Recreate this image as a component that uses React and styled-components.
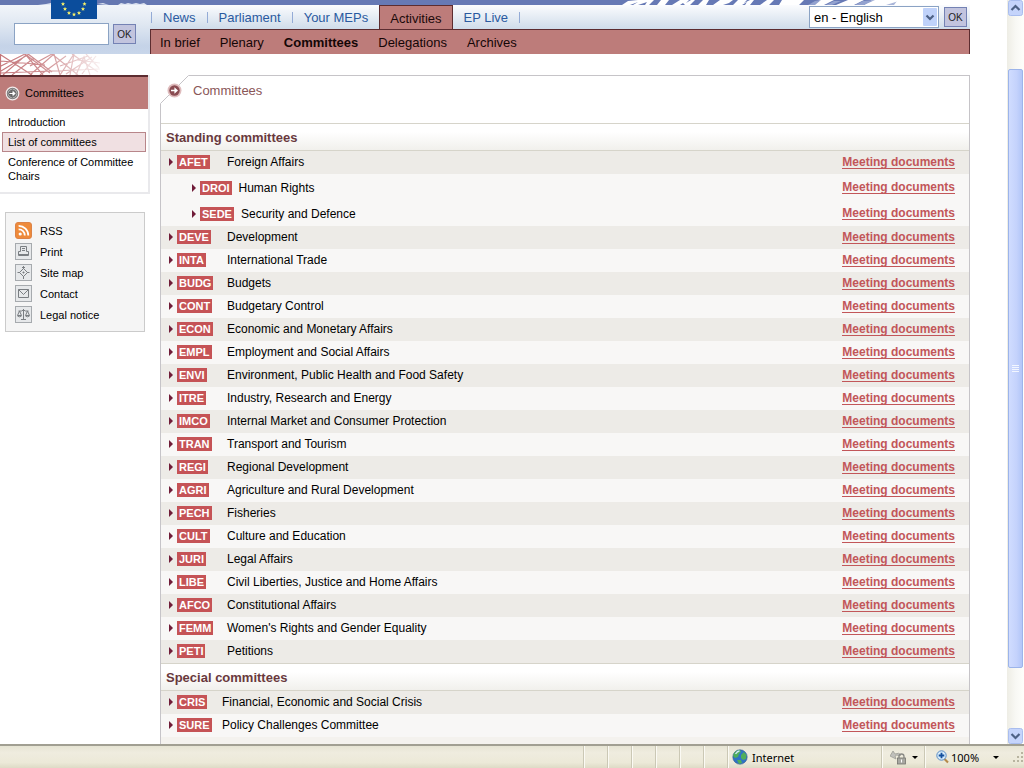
import React from "react";
import styled, { createGlobalStyle } from "styled-components";

const c = {
  rose: "#bd7c7a",
  roseDark: "#5c2c30",
  badge: "#c55356",
  link: "#c25659",
  blue: "#2a5aa0",
  line: "#c6c4c8",
  rowLine: "#d6d4ca",
};

const GlobalStyle = createGlobalStyle`
  * { box-sizing: border-box; }
  body {
    margin: 0;
    background: #fff;
    color: #000;
    font-family: "Liberation Sans", Arial, sans-serif;
    font-size: 12px;
  }
  a { color: inherit; text-decoration: none; }
  ul { list-style: none; margin: 0; padding: 0; }
  h1, h2 { margin: 0; }
`;

const Window = styled.div`
  display: flex;
  flex-direction: column;
  min-height: 100vh;
`;

const Viewport = styled.div`
  display: flex;
  flex: 1;
`;

const Page = styled.div`
  display: flex;
  flex-direction: column;
  flex: 1;
  min-width: 0;
  padding-right: 37px;
`;

/* ---------- header ---------- */

const Header = styled.header`
  display: grid;
  grid-template-columns: 150px 1fr;
`;

const Brand = styled.div`
  display: flex;
  flex-direction: column;
  height: 54px;
  background: linear-gradient(#6577b1 5px, #f2f5fa 5px, #e0e8f2 24px, #c5d3e8 46px, #c8d6ea);
`;

const Flag = styled.svg`
  display: block;
`;

const SearchForm = styled.form`
  display: flex;
  align-items: center;
  gap: 4px;
  margin: 4px 0 0 14px;
`;

const SearchBox = styled.input`
  width: 95px;
  height: 22px;
  padding: 0 3px;
  border: 1px solid #8ba3c4;
  background: #fff;
  font: 12px "Liberation Sans", Arial, sans-serif;
`;

const OkButton = styled.button`
  width: 23px;
  height: 20px;
  padding: 0;
  border: 1px solid #7482b4;
  background: #c2c4de;
  color: #222;
  font: 10px "Liberation Sans", Arial, sans-serif;
`;

const HeaderMain = styled.div`
  display: flex;
  flex-direction: column;
  min-width: 0;
`;

const Strip = styled.div`
  display: flex;
  justify-content: flex-end;
  height: 5px;
  background: #6679b5;
`;

const NavBar = styled.div`
  display: flex;
  justify-content: space-between;
  height: 24px;
  padding: 0 3px 0 1px;
  background: linear-gradient(#fbfcfe, #cfdcea);
`;

const NavList = styled.ul`
  display: flex;
  height: 25px;
  font-size: 13px;
  color: ${c.blue};
`;

const NavItem = styled.li`
  display: flex;
  align-items: center;
  height: 25px;
  padding: ${(p) => (p.$active ? "0 10px" : "0 11px")};
  ${(p) =>
    p.$active &&
    `
    color: #1c0a0a;
    background: ${c.rose};
    border: 1px solid ${c.roseDark};
    border-bottom: 0;
  `}
`;

const Divider = styled.li`
  align-self: center;
  width: 1px;
  height: 11px;
  background: #94abd6;
`;

const LangForm = styled.form`
  display: flex;
  align-items: center;
  gap: 5px;
`;

const SelectWrap = styled.span`
  position: relative;
  display: flex;
`;

const Select = styled.select`
  appearance: none;
  width: 130px;
  height: 22px;
  padding: 0 20px 0 4px;
  border: 1px solid #8ba3c4;
  border-radius: 0;
  background: #fff;
  color: #000;
  font: 13px "Liberation Sans", Arial, sans-serif;
`;

const SelectArrow = styled.svg`
  position: absolute;
  right: 2px;
  top: 2px;
  pointer-events: none;
`;

const SubNav = styled.ul`
  display: flex;
  align-items: center;
  height: 25px;
  padding-left: 9px;
  gap: 20px;
  border: 1px solid ${c.roseDark};
  border-bottom: 0;
  background: ${c.rose};
  color: #140606;
  font-size: 13px;
`;

const SubNavItem = styled.li`
  font-weight: ${(p) => (p.$active ? "bold" : "normal")};
`;

/* ---------- side column ---------- */

const Body = styled.div`
  display: grid;
  grid-template-columns: 150px 1fr;
  column-gap: 10px;
  flex: 1;
`;

const Side = styled.aside`
  font-size: 11px;
`;

const Lattice = styled.svg`
  display: block;
`;

const SideMenu = styled.nav`
  padding-bottom: 6px;
  border-right: 2px solid #e9e9ec;
  border-bottom: 2px solid #e9e9ec;
`;

const SideHead = styled.div`
  display: flex;
  align-items: center;
  gap: 5px;
  height: 34px;
  padding-left: 5px;
  border-top: 2px solid ${c.roseDark};
  background: ${c.rose};
`;

const SideList = styled.ul`
  display: flex;
  flex-direction: column;
  padding: 3px 2px 0;
  line-height: 14px;
`;

const SideItem = styled.li`
  padding: 2px 5px;
  border: 1px solid ${(p) => (p.$active ? "#b8868a" : "transparent")};
  background: ${(p) => (p.$active ? "#f0e0e2" : "transparent")};
`;

const Tools = styled.ul`
  display: flex;
  flex-direction: column;
  gap: 4px;
  margin: 18px 5px 0;
  padding: 9px 9px 8px;
  border: 1px solid #cbcbcb;
  background: #f5f5f5;
`;

const Tool = styled.li`
  display: flex;
  align-items: center;
  gap: 8px;
  height: 17px;
`;

/* ---------- content card ---------- */

const Card = styled.main`
  position: relative;
  margin-top: 21px;
  border: 1px solid ${c.line};
  border-bottom: 0;
  background: linear-gradient(#fff 50%, #f4f2ee 50%);
`;

const Corner = styled.svg`
  position: absolute;
  top: -1px;
  left: -1px;
`;

const Title = styled.h1`
  position: relative;
  display: flex;
  align-items: flex-start;
  gap: 11px;
  height: 47px;
  padding: 7px 6px;
  color: #8a5658;
  font-size: 13px;
  font-weight: normal;
  line-height: 16px;
`;

const GroupTitle = styled.h2`
  height: 28px;
  padding-left: 5px;
  border: solid ${c.rowLine};
  border-width: 1px 0;
  background: linear-gradient(#fff 30%, #f1f0ec);
  color: #69393d;
  font-size: 13px;
  line-height: 27px;
`;

const Table = styled.table`
  width: 100%;
  border-collapse: collapse;
  table-layout: fixed;
`;

const Row = styled.tr`
  height: ${(p) => (p.$sub ? 26 : 23)}px;
  background: ${(p) => (p.$dark ? "#edebe7" : "#f8f7f6")};
`;

const Cell = styled.td`
  padding: 0 0 1px;
`;

const CodeCell = styled(Cell)`
  padding-left: 8px;
`;

const LinkCell = styled(Cell)`
  padding-right: 14px;
  text-align: right;
`;

const Committee = styled.div`
  display: flex;
  align-items: center;
  padding: ${(p) => (p.$sub ? "3px 0 0 31px" : "0")};
`;

const Arrow = styled.svg`
  flex: none;
  margin-right: 4px;
`;

const Badge = styled.span`
  height: 14px;
  margin-right: 7px;
  padding: 0 2px;
  background: ${c.badge};
  color: #fff;
  font-size: 11px;
  font-weight: bold;
  line-height: 14px;
`;

const DocLink = styled.a`
  display: inline-block;
  border-bottom: 1px solid ${c.link};
  color: ${c.link};
  font-size: 12px;
  font-weight: bold;
  line-height: 12px;
  vertical-align: middle;
`;

/* ---------- browser frame ---------- */

const ScrollBar = styled.div`
  display: flex;
  flex-direction: column;
  width: 17px;
  padding: 0 1px;
  background: linear-gradient(90deg, #eeede5, #f8f8f4 50%, #fefefb);
`;

const Track = styled.div`
  display: grid;
  flex: 1;
  grid-template-rows: 53fr 599fr 60fr;
`;

const Thumb = styled.div`
  display: flex;
  align-items: center;
  justify-content: center;
  grid-row: 2;
  border: 1px solid #9cb4ea;
  border-radius: 2px;
  background: linear-gradient(90deg, #d0dcff, #c4d2fc 60%, #b2c6f8);
`;

const StatusBar = styled.footer`
  display: flex;
  justify-content: flex-end;
  height: 24px;
  border-top: 2px solid #a19f92;
  background: linear-gradient(#e6e4d3, #efecdf 30%, #ece9d8 75%, #dedbc6);
  font: 11px "Noto Sans", sans-serif;
`;

const Pane = styled.div`
  display: flex;
  align-items: center;
  gap: ${(p) => p.$gap || 0}px;
  width: ${(p) => p.$width}px;
  padding-left: ${(p) => p.$pad || 0}px;
  border-left: 1px solid #cbc8b5;
  box-shadow: inset 1px 0 #fbfaf4;
`;

const Spacer = styled.span`
  flex: 1;
`;

/* ---------- drawings ---------- */

const star = (x, y, r) => {
  const pts = [];
  for (let i = 0; i < 10; i++) {
    const a = (Math.PI / 5) * i - Math.PI / 2;
    const q = i % 2 ? r * 0.45 : r;
    pts.push(`${(x + q * Math.cos(a)).toFixed(2)},${(y + q * Math.sin(a)).toFixed(2)}`);
  }
  return pts.join(" ");
};

const FlagArt = () => (
  <Flag width="150" height="19" viewBox="0 0 150 19" role="img" aria-label="European Parliament">
    <path d="M38 5l8-1 5-1v2zM97 4l6-1 6 2zM118 5l3-2 4 1 3-1 4 1 4-1 4 1 4-1 3 2z" fill="#dfe5f2" />
    <rect x="51" y="0" width="46" height="19" fill="#0b4d9c" />
    {[
      [63, 4],
      [65, 9],
      [69, 13],
      [74, 14.5],
      [79, 13],
      [83, 9],
      [84.5, 4],
    ].map(([x, y]) => (
      <polygon key={x} points={star(x, y, 2.2)} fill="#f5f06a" />
    ))}
  </Flag>
);

const StripArt = () => (
  <svg width="350" height="5" viewBox="0 0 350 5" aria-hidden="true">
    <path d="M278 0H350V5H262z" fill="#fff" />
    <path d="M261 5l7-4h9l-3 4z" fill="#a9b5d8" />
    <path
      d="M2 5L8 1l10-1h16l-5 5h-4l2-3-9 3H13l5-3-8 3zM37 5l4-5h8l-4 5zM52 5l8-5h9l-3 3 5-3h4l-5 5h-5l-2-2-3 2zM78 5l5-5h6l-3 5zM93 5l7-5h13l-4 3-6 2zM113 5l5-5h9l-3 3 6-3h4l-4 5h-5l2-3-5 3zM140 5l7-5h7l-5 5zM159 5l3-5h22l-5 5zM193 5l7-5h14l-10 5zM216 5l12-5h16l-10 5zM244 5l8-5h30l-16 5z"
      fill="#fff"
    />
    <path d="M188 5l7-4 6-1-6 5zM206 5l8-4h7l-9 4zM235 5l8-4 12-1-11 5z" fill="#93a2cf" />
  </svg>
);

const LatticeArt = () => (
  <Lattice width="150" height="21" viewBox="0 0 150 21" aria-hidden="true">
    <defs>
      <linearGradient id="fade">
        <stop offset="0" stopColor="#fff" stopOpacity="0" />
        <stop offset=".45" stopColor="#fff" stopOpacity=".2" />
        <stop offset="1" stopColor="#fff" stopOpacity=".9" />
      </linearGradient>
    </defs>
    <path
      d="M.5 0V21M1 1L32 21M1 17L29 0M1 12L25 0L50 19M1 7L45 11M3 21L26 1L43 21M12 21L34 4M1 19L100 15M28 0L52 18M30 21L54 0L60 21M40 21L66 2M52 0L78 21M52 0L30 12M60 21L74 0L70 21M60 12L88 2M72 0L98 18M66 20L92 3M76 21L84 3L90 21M82 20L96 2M86 0L99 14M78 6L100 9"
      fill="none"
      stroke="#c5777b"
      strokeWidth="1.2"
    />
    <rect width="101" height="21" fill="url(#fade)" />
  </Lattice>
);

const TitleBullet = () => (
  <svg width="15" height="15" viewBox="0 0 15 15" aria-hidden="true">
    <circle cx="7.5" cy="7.5" r="7" fill="#dfbcbd" />
    <circle cx="7.5" cy="7.5" r="5.2" fill="#8a4c52" />
    <path d="M4 6.7h3.4V4.2L11 7.5l-3.6 3.3V8.3H4z" fill="#fff" />
  </svg>
);

const SideBullet = () => (
  <svg width="15" height="15" viewBox="0 0 15 15" aria-hidden="true">
    <circle cx="7.5" cy="7.5" r="6.3" fill="#747474" stroke="#f3ecec" strokeWidth="1.2" />
    <circle cx="7.5" cy="7.5" r="4.4" fill="none" stroke="#c9c9c9" strokeWidth=".8" />
    <path d="M4 6.5h3.2V3.8L11.2 7.5l-4 3.7V8.5H4z" fill="#fff" stroke="#333" strokeWidth=".6" />
  </svg>
);

const iconPaths = {
  Print: "M5.500 8.500V3.500h6v5M7 5.500H10M7 7.500H10M3.500 8.500h2M11.500 8.500h2v4h-10v-4M3 11.500h11",
  "Site map": "M8.500 2v3M8.500 12v3M2.500 8.500H5M12 8.500h2.500M8.500 4.500l4 4-4 4-4-4zM7 3.500h3M8.500 7.500v2M7.500 8.500h2",
  Contact: "M3.500 4.500h10v8h-10zM3.500 4.500l5 5 5-5",
  "Legal notice":
    "M8.500 3v10M6 13.500h5M3.500 5h3l2-1 2 1h3M4.500 5l-2 4.500h4zM12.500 5l-2 4.500h4zM2.500 10q2 1.600 4 0M10.500 10q2 1.600 4 0",
};

const ToolIcon = ({ name }) =>
  name === "RSS" ? (
    <svg width="17" height="17" viewBox="0 0 17 17" aria-hidden="true">
      <rect x=".5" y=".5" width="16" height="16" rx="2.5" fill="#ee8a3a" stroke="#dc8348" />
      <circle cx="5.2" cy="12" r="1.6" fill="#fff" />
      <path d="M3.6 7.3a6 6 0 0 1 6.2 6.2M3.6 3.8a9.6 9.6 0 0 1 9.7 9.7" fill="none" stroke="#fff" strokeWidth="1.8" />
    </svg>
  ) : (
    <svg width="17" height="17" viewBox="0 0 17 17" aria-hidden="true">
      <rect x=".5" y=".5" width="16" height="16" fill="#e6e8ea" stroke="#a6aaae" />
      <path d={iconPaths[name]} fill="none" stroke="#7a7e82" />
    </svg>
  );

const ScrollButton = ({ down }) => (
  <svg width="15" height="16" viewBox="0 0 15 16" aria-hidden="true">
    <rect x=".5" y=".5" width="14" height="15" rx="2" fill="#c5d4fb" stroke="#a9bdee" />
    <path d={down ? "M3.5 6l4 4 4-4" : "M3.5 10l4-4 4 4"} fill="none" stroke="#4d6185" strokeWidth="2.2" />
  </svg>
);

const DropMark = () => (
  <svg width="6" height="3" viewBox="0 0 6 3" aria-hidden="true">
    <path d="M0 0h6L3 3z" fill="#000" />
  </svg>
);

const Globe = () => (
  <svg width="16" height="16" viewBox="0 0 16 16" aria-hidden="true">
    <circle cx="8" cy="8" r="7.2" fill="#2f74c4" stroke="#33598f" strokeWidth=".6" />
    <path d="M2 4q3-3.5 6-3l1 2-2 2-1 3-3 1-2-2zM9 6l3-3 2.5 3-.5 4-3 1-2-2zM5 11l4 0 1 3-3 1z" fill="#4fae5a" />
    <path d="M3.5 5q2-3 4-3" fill="none" stroke="#cfe8fb" strokeWidth="1.3" />
  </svg>
);

const LockIcon = () => (
  <svg width="16" height="16" viewBox="0 0 16 16" aria-hidden="true">
    <path d="M0 7l3-5 2 3q4-2 6 1l-2 1q-2-2-4 0l1 3z" fill="#c0c0bc" stroke="#96968f" strokeWidth=".7" />
    <path d="M9 9V7.5a2.5 2.5 0 0 1 5 0V9" fill="none" stroke="#8a8a86" strokeWidth="1.3" />
    <rect x="7.5" y="9" width="8" height="6" fill="#a8a8a2" stroke="#74746e" strokeWidth=".8" />
    <path d="M11.5 10.500v3" stroke="#fff" />
  </svg>
);

const ZoomIcon = () => (
  <svg width="13" height="14" viewBox="0 0 13 14" aria-hidden="true">
    <path d="M8 8.5l4 4" stroke="#b58a4a" strokeWidth="2.2" />
    <circle cx="5.5" cy="5.5" r="4.7" fill="#d6ebfa" stroke="#5b8cc4" />
    <path d="M5.5 2.7v5.6M2.7 5.5h5.6" stroke="#14509e" strokeWidth="1.8" />
  </svg>
);

const SizeGrip = () => (
  <svg width="12" height="12" viewBox="0 0 12 12" aria-hidden="true">
    <path d="M9 1h2v2H9zM5 5h2v2H5zM9 5h2v2H9zM1 9h2v2H1zM5 9h2v2H5zM9 9h2v2H9z" fill="#b8b4a0" />
  </svg>
);

/* ---------- data ---------- */

const standing = [
  ["AFET", "Foreign Affairs", [["DROI", "Human Rights"], ["SEDE", "Security and Defence"]]],
  ["DEVE", "Development"],
  ["INTA", "International Trade"],
  ["BUDG", "Budgets"],
  ["CONT", "Budgetary Control"],
  ["ECON", "Economic and Monetary Affairs"],
  ["EMPL", "Employment and Social Affairs"],
  ["ENVI", "Environment, Public Health and Food Safety"],
  ["ITRE", "Industry, Research and Energy"],
  ["IMCO", "Internal Market and Consumer Protection"],
  ["TRAN", "Transport and Tourism"],
  ["REGI", "Regional Development"],
  ["AGRI", "Agriculture and Rural Development"],
  ["PECH", "Fisheries"],
  ["CULT", "Culture and Education"],
  ["JURI", "Legal Affairs"],
  ["LIBE", "Civil Liberties, Justice and Home Affairs"],
  ["AFCO", "Constitutional Affairs"],
  ["FEMM", "Women's Rights and Gender Equality"],
  ["PETI", "Petitions"],
];

const special = [
  ["CRIS", "Financial, Economic and Social Crisis"],
  ["SURE", "Policy Challenges Committee"],
];

/* shaded rows alternate; sub-committees share a light band */
const toRows = (list) => {
  const rows = [];
  let dark = true;
  list.forEach(([code, name, subs = []]) => {
    rows.push({ code, name, dark });
    subs.forEach(([subCode, subName]) => rows.push({ code: subCode, name: subName, sub: true }));
    dark = subs.length ? true : !dark;
  });
  return rows;
};

const Tag = ({ code }) => (
  <>
    <Arrow width="4" height="8" viewBox="0 0 4 8" aria-hidden="true">
      <path d="M0 0l4 4-4 4z" fill="#701c38" />
    </Arrow>
    <Badge>{code}</Badge>
  </>
);

const CodeCol = styled.col`
  width: ${(p) => p.$width}px;
`;

const LinkCol = styled.col`
  width: 140px;
`;

const CommitteeTable = ({ list, codeWidth, label }) => (
  <Table aria-label={label}>
    <colgroup>
      <CodeCol $width={codeWidth} />
      <col />
      <LinkCol />
    </colgroup>
    <tbody>
      {toRows(list).map((r) => (
        <Row key={r.code} $dark={r.dark} $sub={r.sub}>
          {r.sub ? (
            <Cell colSpan={2}>
              <Committee $sub>
                <Tag code={r.code} />
                <a href="#committee">{r.name}</a>
              </Committee>
            </Cell>
          ) : (
            <>
              <CodeCell>
                <Committee>
                  <Tag code={r.code} />
                </Committee>
              </CodeCell>
              <Cell>
                <a href="#committee">{r.name}</a>
              </Cell>
            </>
          )}
          <LinkCell>
            <DocLink href="#documents">Meeting documents</DocLink>
          </LinkCell>
        </Row>
      ))}
    </tbody>
  </Table>
);

const stop = (e) => e.preventDefault();

export default function App() {
  return (
    <>
      <GlobalStyle />
      <Window>
        <Viewport>
          <Page>
            <Header>
              <Brand>
                <FlagArt />
                <SearchForm onSubmit={stop}>
                  <SearchBox type="text" aria-label="Search" />
                  <OkButton type="submit">OK</OkButton>
                </SearchForm>
              </Brand>
              <HeaderMain>
                <Strip>
                  <StripArt />
                </Strip>
                <NavBar>
                  <NavList>
                    <Divider aria-hidden="true" />
                    <NavItem><a href="#news">News</a></NavItem>
                    <Divider aria-hidden="true" />
                    <NavItem><a href="#parliament">Parliament</a></NavItem>
                    <Divider aria-hidden="true" />
                    <NavItem><a href="#meps">Your MEPs</a></NavItem>
                    <NavItem $active><a href="#activities">Activities</a></NavItem>
                    <NavItem><a href="#live">EP Live</a></NavItem>
                    <Divider aria-hidden="true" />
                  </NavList>
                  <LangForm onSubmit={stop}>
                    <SelectWrap>
                      <Select aria-label="Language" defaultValue="en">
                        <option value="en">en - English</option>
                      </Select>
                      <SelectArrow width="14" height="18" viewBox="0 0 14 18" aria-hidden="true">
                        <rect width="14" height="18" rx="1" fill="#c0d2fa" />
                        <path d="M3.5 7.5L7 11l3.5-3.5" fill="none" stroke="#4d6185" strokeWidth="2.2" />
                      </SelectArrow>
                    </SelectWrap>
                    <OkButton type="submit">OK</OkButton>
                  </LangForm>
                </NavBar>
                <SubNav>
                  {["In brief", "Plenary", "Committees", "Delegations", "Archives"].map((t) => (
                    <SubNavItem key={t} $active={t === "Committees"}>
                      <a href="#section">{t}</a>
                    </SubNavItem>
                  ))}
                </SubNav>
              </HeaderMain>
            </Header>

            <Body>
              <Side>
                <LatticeArt />
                <SideMenu>
                  <SideHead>
                    <SideBullet />
                    Committees
                  </SideHead>
                  <SideList>
                    <SideItem><a href="#intro">Introduction</a></SideItem>
                    <SideItem $active><a href="#list">List of committees</a></SideItem>
                    <SideItem><a href="#chairs">Conference of Committee Chairs</a></SideItem>
                  </SideList>
                </SideMenu>
                <Tools>
                  {["RSS", "Print", "Site map", "Contact", "Legal notice"].map((t) => (
                    <Tool key={t}>
                      <ToolIcon name={t} />
                      <a href="#tool">{t}</a>
                    </Tool>
                  ))}
                </Tools>
              </Side>

              <Card>
                <Corner width="30" height="30" viewBox="0 0 30 30" aria-hidden="true">
                  <path d="M0 0H30L0 30z" fill="#fff" />
                  <path d="M.5 30V28.5L28.5 .5H30" fill="none" stroke={c.line} />
                </Corner>
                <Title>
                  <TitleBullet />
                  Committees
                </Title>
                <GroupTitle>Standing committees</GroupTitle>
                <CommitteeTable list={standing} codeWidth={66} label="Standing committees" />
                <GroupTitle>Special committees</GroupTitle>
                <CommitteeTable list={special} codeWidth={61} label="Special committees" />
              </Card>
            </Body>
          </Page>

          <ScrollBar aria-hidden="true">
            <ScrollButton />
            <Track>
              <Thumb>
                <svg width="7" height="8" viewBox="0 0 7 8">
                  <path d="M0 .5h7M0 2.5h7M0 4.5h7M0 6.5h7" stroke="#f2f6ff" />
                </svg>
              </Thumb>
            </Track>
            <ScrollButton down />
          </ScrollBar>
        </Viewport>

        <StatusBar>
          {[0, 1, 2, 3, 4, 5].map((i) => (
            <Pane key={i} $width={24} />
          ))}
          <Pane $width={154} $pad={4} $gap={4}>
            <Globe />
            Internet
          </Pane>
          <Pane $width={43} $pad={8} $gap={6}>
            <LockIcon />
            <DropMark />
          </Pane>
          <Pane $width={100} $pad={11} $gap={2}>
            <ZoomIcon />
            100%
            <Spacer />
            <DropMark />
            <Spacer />
            <SizeGrip />
          </Pane>
        </StatusBar>
      </Window>
    </>
  );
}
